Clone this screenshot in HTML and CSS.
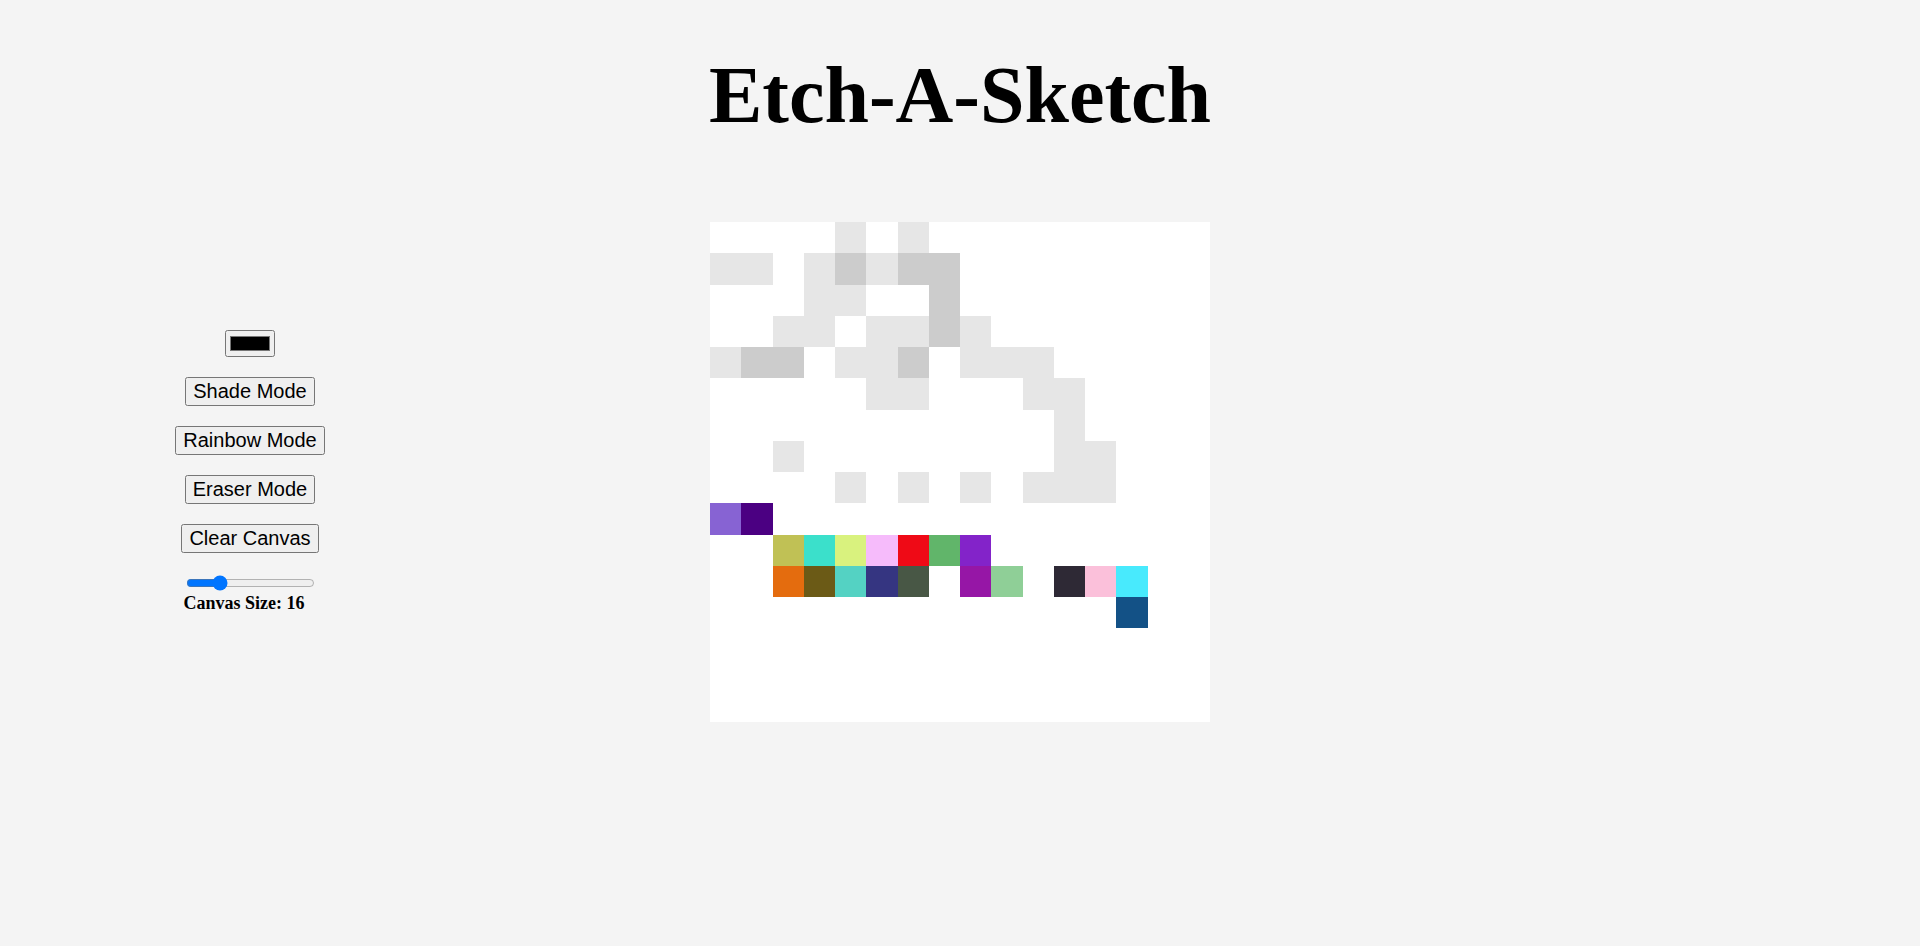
FILE: index.html
```html
<!DOCTYPE html>
<html lang="en">
<head>
<meta charset="UTF-8">
<title>Etch-A-Sketch</title>
<link rel="stylesheet" href="styles.css">
</head>
<body>
<h1 class="title">Etch-A-Sketch</h1>
<div class="layout">
  <div class="controls">
    <input type="color" class="color-picker" value="#000000">
    <button class="mode-btn">Shade Mode</button>
    <button class="mode-btn">Rainbow Mode</button>
    <button class="mode-btn">Eraser Mode</button>
    <button class="mode-btn">Clear Canvas</button>
    <div class="size-group">
      <input type="range" class="size-slider" min="1" max="64" value="16">
      <div class="size-label">Canvas Size: 16</div>
    </div>
  </div>
  <div class="canvas" id="canvas"></div>
  <div class="spacer"></div>
</div>
<script src="script.js"></script>
</body>
</html>
```
FILE: styles.css
```css
body {
  margin: 0;
  background: #f4f4f4;
  font-family: "Liberation Serif", "Times New Roman", serif;
}

.title {
  margin: 0;
  padding-top: 51px;
  font-size: 80px;
  line-height: 88px;
  font-weight: bold;
  text-align: center;
  color: #000;
}

.layout {
  display: flex;
  justify-content: space-between;
  align-items: center;
  margin-top: 83px;
}

.controls {
  width: 500px;
  display: flex;
  flex-direction: column;
  align-items: center;
  gap: 20px;
}

.mode-btn {
  font-family: "Liberation Sans", Arial, sans-serif;
  font-size: 20px;
}

.size-group {
  text-align: left;
}

.size-slider {
  display: block;
}

.size-label {
  font-size: 18px;
  font-weight: bold;
}

.canvas {
  width: 500px;
  height: 500px;
  background: #ffffff;
  display: grid;
  grid-template-columns: repeat(16, 1fr);
  grid-template-rows: repeat(16, 1fr);
}

.cell.light {
  background: #e6e6e6;
}

.cell.dark {
  background: #cccccc;
}

.spacer {
  width: 500px;
}
```
FILE: script.js
```js
const rows = [
  "....a.a.........",
  "aa.ababb........",
  "...aa..b........",
  "..aa.aaba.......",
  "abb.aab.aaa.....",
  ".....aa...aa....",
  "...........a....",
  "..a........aa...",
  "....a.a.a.aaa...",
  "................",
  "................",
  "................",
  "................",
  "................",
  "................",
  "................"
];
const colored = {
  "9,0": "#8763d3", "9,1": "#4b0082",
  "10,2": "#c0c155", "10,3": "#3be0cb", "10,4": "#d9f27e", "10,5": "#f6bbfb",
  "10,6": "#ef0a16", "10,7": "#61b56a", "10,8": "#8323c9",
  "11,2": "#e46c0e", "11,3": "#6b5a16", "11,4": "#54d2c3", "11,5": "#353581",
  "11,6": "#485745", "11,8": "#9616a6", "11,9": "#8fcf97",
  "11,11": "#2e2935", "11,12": "#fbc0da", "11,13": "#48eafd",
  "12,13": "#135186"
};
const canvas = document.getElementById("canvas");
for (let r = 0; r < 16; r++) {
  for (let c = 0; c < 16; c++) {
    const cell = document.createElement("div");
    cell.className = "cell";
    const ch = rows[r][c];
    if (ch === "a") cell.classList.add("light");
    if (ch === "b") cell.classList.add("dark");
    const col = colored[r + "," + c];
    if (col) cell.style.background = col;
    canvas.appendChild(cell);
  }
}
```
